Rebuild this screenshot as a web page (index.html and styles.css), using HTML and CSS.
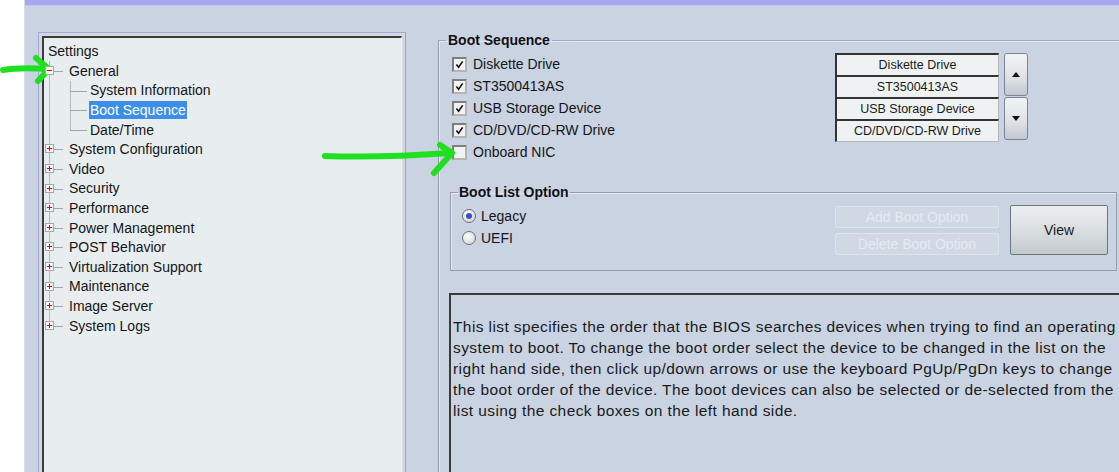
FILE: index.html
```html
<html>
    <head>
        <title>Boot Sequence</title>
        <link rel="stylesheet" href="styles.css">
    </head>
    <body>
        <div class="gutter"></div>
        <div class="app">
            <div class="titlebar"></div>
            <div class="workspace">
                <div class="tree-frame">
                    <div class="tree">
                        <div class="root">Settings</div>
                        <ul class="level">
                            <li>
                                <svg class="exp" viewBox="0 0 9 9"><rect x="0.5" y="0.5" width="8" height="8" fill="#f4f4f4" stroke="#a8a8a8"/><path d="M2 4.5h5" stroke="#d01010"/></svg>
                                <span class="label">General</span>
                                <ul class="sub">
                                    <li><span class="label">System Information</span></li>
                                    <li><span class="label selected">Boot Sequence</span></li>
                                    <li><span class="label">Date/Time</span></li>
                                </ul>
                            </li>
                            <li>
                                <svg class="exp" viewBox="0 0 9 9"><rect x="0.5" y="0.5" width="8" height="8" fill="#f4f4f4" stroke="#a8a8a8"/><path d="M2 4.5h5M4.5 2v5" stroke="#d01010"/></svg>
                                <span class="label">System Configuration</span>
                            </li>
                            <li>
                                <svg class="exp" viewBox="0 0 9 9"><rect x="0.5" y="0.5" width="8" height="8" fill="#f4f4f4" stroke="#a8a8a8"/><path d="M2 4.5h5M4.5 2v5" stroke="#d01010"/></svg>
                                <span class="label">Video</span>
                            </li>
                            <li>
                                <svg class="exp" viewBox="0 0 9 9"><rect x="0.5" y="0.5" width="8" height="8" fill="#f4f4f4" stroke="#a8a8a8"/><path d="M2 4.5h5M4.5 2v5" stroke="#d01010"/></svg>
                                <span class="label">Security</span>
                            </li>
                            <li>
                                <svg class="exp" viewBox="0 0 9 9"><rect x="0.5" y="0.5" width="8" height="8" fill="#f4f4f4" stroke="#a8a8a8"/><path d="M2 4.5h5M4.5 2v5" stroke="#d01010"/></svg>
                                <span class="label">Performance</span>
                            </li>
                            <li>
                                <svg class="exp" viewBox="0 0 9 9"><rect x="0.5" y="0.5" width="8" height="8" fill="#f4f4f4" stroke="#a8a8a8"/><path d="M2 4.5h5M4.5 2v5" stroke="#d01010"/></svg>
                                <span class="label">Power Management</span>
                            </li>
                            <li>
                                <svg class="exp" viewBox="0 0 9 9"><rect x="0.5" y="0.5" width="8" height="8" fill="#f4f4f4" stroke="#a8a8a8"/><path d="M2 4.5h5M4.5 2v5" stroke="#d01010"/></svg>
                                <span class="label">POST Behavior</span>
                            </li>
                            <li>
                                <svg class="exp" viewBox="0 0 9 9"><rect x="0.5" y="0.5" width="8" height="8" fill="#f4f4f4" stroke="#a8a8a8"/><path d="M2 4.5h5M4.5 2v5" stroke="#d01010"/></svg>
                                <span class="label">Virtualization Support</span>
                            </li>
                            <li>
                                <svg class="exp" viewBox="0 0 9 9"><rect x="0.5" y="0.5" width="8" height="8" fill="#f4f4f4" stroke="#a8a8a8"/><path d="M2 4.5h5M4.5 2v5" stroke="#d01010"/></svg>
                                <span class="label">Maintenance</span>
                            </li>
                            <li>
                                <svg class="exp" viewBox="0 0 9 9"><rect x="0.5" y="0.5" width="8" height="8" fill="#f4f4f4" stroke="#a8a8a8"/><path d="M2 4.5h5M4.5 2v5" stroke="#d01010"/></svg>
                                <span class="label">Image Server</span>
                            </li>
                            <li>
                                <svg class="exp" viewBox="0 0 9 9"><rect x="0.5" y="0.5" width="8" height="8" fill="#f4f4f4" stroke="#a8a8a8"/><path d="M2 4.5h5M4.5 2v5" stroke="#d01010"/></svg>
                                <span class="label">System Logs</span>
                            </li>
                        </ul>
                    </div>
                </div>

                <fieldset class="group boot">
                    <legend>Boot Sequence</legend>
                    <div class="seq">
                        <div class="checklist">
                            <label class="check"><span class="cb"><svg viewBox="0 0 10 10"><path d="M1.5 5l2.5 3L8.5 1.5" fill="none" stroke="#111" stroke-width="1.8"/></svg></span>Diskette Drive</label>
                            <label class="check"><span class="cb"><svg viewBox="0 0 10 10"><path d="M1.5 5l2.5 3L8.5 1.5" fill="none" stroke="#111" stroke-width="1.8"/></svg></span>ST3500413AS</label>
                            <label class="check"><span class="cb"><svg viewBox="0 0 10 10"><path d="M1.5 5l2.5 3L8.5 1.5" fill="none" stroke="#111" stroke-width="1.8"/></svg></span>USB Storage Device</label>
                            <label class="check"><span class="cb"><svg viewBox="0 0 10 10"><path d="M1.5 5l2.5 3L8.5 1.5" fill="none" stroke="#111" stroke-width="1.8"/></svg></span>CD/DVD/CD-RW Drive</label>
                            <label class="check"><span class="cb"></span>Onboard NIC</label>
                        </div>
                        <div class="devices">
                            <div class="device">Diskette Drive</div>
                            <div class="device">ST3500413AS</div>
                            <div class="device">USB Storage Device</div>
                            <div class="device">CD/DVD/CD-RW Drive</div>
                        </div>
                        <div class="arrows">
                            <div class="arrow"><svg viewBox="0 0 8 5"><path d="M0 5L4 0L8 5z" fill="#111"/></svg></div>
                            <div class="arrow"><svg viewBox="0 0 8 5"><path d="M0 0L4 5L8 0z" fill="#111"/></svg></div>
                        </div>
                    </div>

                    <fieldset class="group options">
                        <legend>Boot List Option</legend>
                        <div class="options-body">
                            <div class="radios">
                                <label class="radio"><span class="rb on"></span>Legacy</label>
                                <label class="radio"><span class="rb"></span>UEFI</label>
                            </div>
                            <div class="option-buttons">
                                <div class="btn disabled">Add Boot Option</div>
                                <div class="btn disabled">Delete Boot Option</div>
                            </div>
                            <div class="btn view">View</div>
                        </div>
                    </fieldset>

                    <div class="help">
                        This list specifies the order that the BIOS searches devices when trying to find an operating<br>
                        system to boot. To change the boot order select the device to be changed in the list on the<br>
                        right hand side, then click up/down arrows or use the keyboard PgUp/PgDn keys to change<br>
                        the boot order of the device. The boot devices can also be selected or de-selected from the<br>
                        list using the check boxes on the left hand side.
                    </div>
                </fieldset>
            </div>
        </div>

        <!-- hand-drawn green arrows on top of the screenshot -->
        <svg class="annot" viewBox="0 0 1119 472">
            <g fill="none" stroke="#1fe01f" stroke-width="6" stroke-linecap="round" stroke-linejoin="round">
                <path d="M3 70 Q20 67 48 69"/>
                <path d="M36 58 L49 69 L38 81"/>
                <path d="M325 156 Q380 158 449 153"/>
                <path d="M440 145 L452 153 L434 173"/>
            </g>
        </svg>
    </body>
</html>
```

FILE: styles.css
```css
body {
    margin: 0;
    display: flex;
    height: 472px;
    overflow: hidden;
    background: #ffffff;
    font-family: "Liberation Sans", Arial, sans-serif;
    font-size: 14px;
    color: #151515;
}
.gutter {
    width: 24px;
    flex: none;
    background: #ffffff;
}
.app {
    flex: 1;
    background: #c9d3e2;
    border-left: 1px solid #d6dde8;
    overflow: hidden;
}
.titlebar {
    height: 5px;
    background: #a9a8ee;
    border-bottom: 1px solid #c4c4f2;
}
.workspace {
    display: flex;
    align-items: flex-start;
    padding: 26px 0 0 13px;
}

/* settings tree */
.tree-frame {
    width: 368px;
    height: 460px;
    flex: none;
    box-sizing: border-box;
    border: 1px solid #a2a8d8;
    border-right-color: #9aa0d4;
    padding: 3px;
    background: #d2d7e0;
}
.tree {
    height: 100%;
    box-sizing: border-box;
    border-top: 2px solid #3a3a3a;
    border-left: 2px solid #3a3a3a;
    border-right: 1px solid #f4f4f4;
    background: #e8eef0;
    padding: 3.5px 0 0 4px;
}
.root {
    height: 19.6px;
    line-height: 19.6px;
}
.level, .sub {
    list-style: none;
    margin: 0 0 0 1px;
    padding: 0;
}
.level li, .sub li {
    position: relative;
    padding-left: 20px;
}
.level li::before, .sub li::before {
    content: "";
    position: absolute;
    left: 0;
    top: 0;
    bottom: 0;
    width: 1px;
    background: #b4b8bc;
}
.level li:last-child::before, .sub li:last-child::before {
    bottom: auto;
    height: 10px;
}
.level li::after, .sub li::after {
    content: "";
    position: absolute;
    left: 0;
    top: 10px;
    width: 14px;
    height: 1px;
    background: #a0a4a8;
}
.sub li::after {
    width: 17px;
}
.exp {
    position: absolute;
    left: -4px;
    top: 5px;
    width: 9px;
    height: 9px;
    z-index: 1;
}
.label {
    display: inline-block;
    height: 18px;
    line-height: 18px;
    margin: 0.8px 0;
}
.selected {
    background: #3c8ee8;
    color: #ffffff;
    padding: 0 1px;
    margin-left: -1px;
}

/* group boxes */
.group {
    margin: 0;
    border: 1px solid #959cb2;
    box-shadow: inset 1px 1px 0 #e4e8f4;
    min-width: 0;
}
.group legend {
    font-weight: bold;
    line-height: 16px;
    padding: 0 2px;
    color: #111;
}
.boot {
    margin-left: 32px;
    width: 720px;
    height: 470px;
    flex: none;
    box-sizing: border-box;
    padding: 0 0 0 11px;
    border-top-color: #9ea4d8;
}
.boot > legend {
    margin-left: -4px;
}
.seq {
    display: flex;
    padding-top: 5px;
}
.checklist {
    width: 385px;
    box-sizing: border-box;
    padding-left: 3px;
}
.check {
    display: flex;
    align-items: center;
    height: 22px;
    gap: 7px;
}
.cb {
    width: 15px;
    height: 15px;
    box-sizing: border-box;
    border: 2px solid #7e7e7e;
    border-right-color: #b4b4b4;
    border-bottom-color: #b4b4b4;
    background: #f2f2f2;
    display: flex;
    align-items: center;
    justify-content: center;
    margin-left: -1px;
    margin-right: -1px;
}
.cb svg {
    width: 9px;
    height: 9px;
}
.devices {
    width: 164px;
}
.device {
    height: 20px;
    line-height: 20px;
    border-top: 2px solid #333333;
    border-left: 2px solid #333333;
    border-right: 1px solid #b4b8c0;
    background: #eef2f2;
    text-align: center;
    font-size: 12.5px;
    color: #1a1a1a;
}
.device:last-child {
    border-bottom: 1px solid #b4b8c0;
}
.arrows {
    margin-left: 5px;
    display: flex;
    flex-direction: column;
    gap: 1px;
}
.arrow {
    width: 24px;
    height: 43px;
    box-sizing: border-box;
    border: 1px solid #7c8494;
    border-radius: 3px;
    background: linear-gradient(to bottom, #f2f4f6, #dde1e6 60%, #c2c8d0);
    display: flex;
    align-items: center;
    justify-content: center;
}
.arrow svg {
    width: 8px;
    height: 5px;
}

/* boot list option */
.options {
    margin: 21px 0 0 0;
    width: 667px;
    box-sizing: border-box;
    padding: 0 0 0 8px;
}
.options > legend {
    margin-left: -1px;
    padding: 0 1px;
}
.options-body {
    display: flex;
    align-items: flex-start;
    padding: 5px 0 15px;
}
.radios {
    width: 376px;
    box-sizing: border-box;
    padding-left: 3px;
}
.radio {
    display: flex;
    align-items: center;
    height: 22px;
    gap: 5px;
}
.rb {
    width: 14px;
    height: 14px;
    box-sizing: border-box;
    border: 1px solid #6c7078;
    border-radius: 50%;
    background: radial-gradient(circle at 40% 35%, #ffffff, #c8ccd2);
    display: flex;
    align-items: center;
    justify-content: center;
}
.rb.on::after {
    content: "";
    width: 6px;
    height: 6px;
    border-radius: 50%;
    background: #3a4ec8;
}
.option-buttons {
    width: 164px;
    display: flex;
    flex-direction: column;
    gap: 5px;
    padding-top: 1px;
}
.btn {
    box-sizing: border-box;
    border-radius: 2px;
    text-align: center;
}
.btn.disabled {
    height: 22px;
    line-height: 20px;
    border: 1px solid #dfe4ec;
    background: #d0d8e4;
    color: #e6ebf2;
}
.btn.view {
    margin-left: 11px;
    width: 98px;
    height: 50px;
    line-height: 48px;
    border: 1px solid #6c747c;
    background: linear-gradient(to bottom, #eceff1, #d8dde0 55%, #c2c8cc);
    color: #1a1a1a;
}

/* help text */
.help {
    margin: 22px 0 0 -1px;
    width: 690px;
    height: 200px;
    box-sizing: border-box;
    border-top: 2px solid #3a3a3a;
    border-left: 2px solid #3a3a3a;
    padding: 20.5px 0 0 2px;
    font-size: 15.5px;
    letter-spacing: 0.4px;
    line-height: 21px;
    color: #1a1a1a;
    white-space: nowrap;
}

.annot {
    position: absolute;
    left: 0;
    top: 0;
    width: 1119px;
    height: 472px;
    pointer-events: none;
}
```
